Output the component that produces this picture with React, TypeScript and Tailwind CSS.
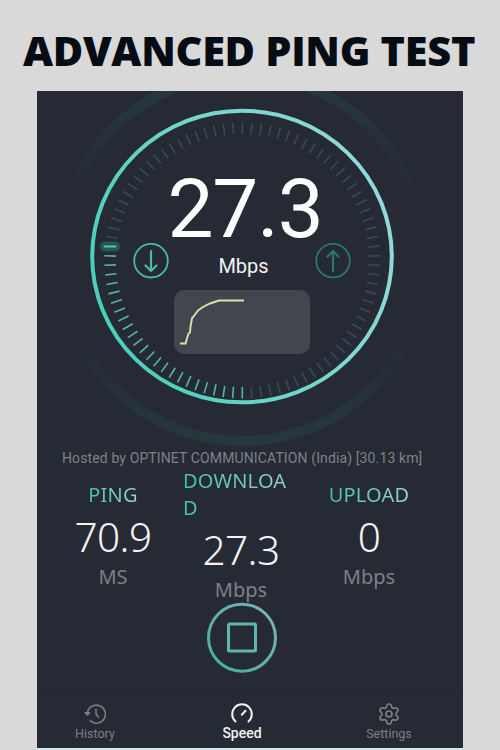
import { Settings } from "lucide-react"

const TICK_COUNT = 90
const ACTIVE_TICKS = 24

const ticks = Array.from({ length: TICK_COUNT }, (_, i) => {
  // starts at the bottom and runs clockwise
  const angle = ((90 + i * (360 / TICK_COUNT)) * Math.PI) / 180
  return {
    x1: 242.3 + 126.5 * Math.cos(angle),
    y1: 260.5 + 126.5 * Math.sin(angle),
    x2: 242.3 + 138 * Math.cos(angle),
    y2: 260.5 + 138 * Math.sin(angle),
    active: i < ACTIVE_TICKS,
  }
})

function Gauge() {
  return (
    <svg viewBox="37 91 426 357" className="col-start-1 row-start-1 h-[357px] w-[426px]" fill="none">
      <defs>
        <linearGradient id="ring" x1="0" y1="0.7" x2="1" y2="0.3">
          <stop offset="0" stopColor="#45cfba" />
          <stop offset="0.5" stopColor="#72d5cb" />
          <stop offset="1" stopColor="#93d9db" />
        </linearGradient>
        <linearGradient id="halo" gradientUnits="userSpaceOnUse" x1="0" y1="75" x2="0" y2="441">
          <stop offset="0" stopColor="#26393f" />
          <stop offset="0.12" stopColor="#26343b" />
          <stop offset="0.32" stopColor="#262a34" />
          <stop offset="0.7" stopColor="#262a34" />
          <stop offset="1" stopColor="#26383d" />
        </linearGradient>
      </defs>
      <circle cx="242.5" cy="258" r="183" stroke="url(#halo)" strokeWidth="10" />
      <ellipse cx="242" cy="256.5" rx="149.8" ry="145.8" stroke="url(#ring)" strokeWidth="4" />
      {ticks.map((t, i) => (
        <line
          key={i}
          x1={t.x1}
          y1={t.y1}
          x2={t.x2}
          y2={t.y2}
          stroke={t.active ? "#52b5aa" : "#38495a"}
          strokeWidth="1.6"
        />
      ))}
      <rect x="100" y="241.5" width="20" height="10" rx="5" fill="#25594f" />
      <path d="M104.5 246.5h11" stroke="#50c9b4" strokeWidth="2" strokeLinecap="round" />
    </svg>
  )
}

function DirectionIcon({ up = false }: { up?: boolean }) {
  return (
    <svg
      viewBox="0 0 36 36"
      className="size-9"
      fill="none"
      stroke={up ? "#2b7770" : "#4bb8aa"}
      strokeWidth="2.2"
      strokeLinecap="round"
      strokeLinejoin="round"
    >
      <circle cx="18" cy="17.700" r="16.8" strokeWidth="1.8" />
      {up ? <path d="M18 28V8M12.5 13.5L18 8l5.5 5.5" /> : <path d="M18 8v20M12.5 22.5L18 28l5.5-5.5" />}
    </svg>
  )
}

function Stat({ label, value, unit }: { label: string; value: string; unit: string }) {
  return (
    <div className="flex w-[116px] flex-col items-center">
      <div className="flex w-full justify-center">
        <p className="max-w-[106px] bg-linear-to-r from-[#3fc2ad] to-[#92d2d4] bg-clip-text text-[20px] leading-[27px] tracking-[0.2px] break-all text-transparent">
          {label}
        </p>
        {label.length > 6 && <span className="w-[10px]" />}
      </div>
      <p className="pt-[2px] text-[40.5px] leading-[53px] font-light tracking-[-0.6px] text-[#f3f3f5]">{value}</p>
      <p className="text-[20px] leading-[27px] text-[#7d8087]">{unit}</p>
    </div>
  )
}

function HistoryIcon() {
  return (
    <svg viewBox="0 0 22 22" className="size-[22px]" fill="none" stroke="currentColor" strokeWidth="1.6" strokeLinecap="round">
      <path d="M3.4 10.4a9 9 0 1 1 3 7.5M12 6.2v4.6l2.4 3.4" />
      <path d="M1.2 9.8h4.2l-2.1 2.2z" fill="currentColor" strokeLinejoin="round" />
    </svg>
  )
}

function SpeedIcon() {
  return (
    <svg viewBox="0 0 22 22" className="size-[22px]" fill="none" stroke="currentColor" strokeWidth="2" strokeLinecap="round">
      <path d="M4.5 18.5a9.8 9.8 0 1 1 13 0M10.8 11.7l3.7-4" />
    </svg>
  )
}

export default function App() {
  return (
    <main className="flex h-[750px] w-[500px] flex-col items-center overflow-hidden bg-[#d9d9d9]">
      <h1 className="flex h-[91px] items-center pt-[9px] pr-[2px] font-['Open_Sans',sans-serif] text-[41.5px] font-extrabold tracking-[-0.3px] whitespace-nowrap text-[#050c13]">
        ADVANCED PING TEST
      </h1>

      <section className="flex h-[657px] w-[426px] flex-col bg-[#262a34] font-['Roboto',sans-serif]">
        <div className="grid h-[357px]">
          <Gauge />
          <div className="col-start-1 row-start-1 flex flex-col items-center pt-[86px]">
            <p className="mr-[10px] text-[82px] leading-[64px] tracking-[-1.2px] text-white">27.3</p>
            <div className="mt-[2px] mr-[16px] flex h-9 w-[218px] items-center justify-between">
              <DirectionIcon />
              <p className="pt-[9px] pl-[3px] text-[20px] leading-6 text-[#f2f2f4]">Mbps</p>
              <DirectionIcon up />
            </div>
            <div className="mt-[11px] mr-[16px] h-16 w-[136px] rounded-[10px] bg-[#42464e]">
              <svg viewBox="174 290 136 64" className="h-16 w-[136px]" fill="none">
                <path
                  d="M180 343.5h5.500l1.5-5 1.5-5 1.5-1 .5-6 1.5-8 3-4 3-4 5-3.5 7-3.5 9-3h25"
                  stroke="#d5e5a7"
                  strokeWidth="1.9"
                />
              </svg>
            </div>
          </div>
        </div>

        <p className="pl-[25px] text-[14px] leading-5 tracking-[0.12px] whitespace-nowrap text-[#7e8188]">
          Hosted by OPTINET COMMUNICATION (India) [30.13 km]
        </p>

        <div className="-mt-px flex h-[136px] items-center gap-[12px] pl-[18px] font-['Noto_Sans',sans-serif]">
          <Stat label="PING" value="70.9" unit="MS" />
          <Stat label="DOWNLOAD" value="27.3" unit="Mbps" />
          <Stat label="UPLOAD" value="0" unit="Mbps" />
        </div>

        <svg viewBox="0 0 72 72" className="-mt-px ml-[169px] size-[72px]" fill="none">
          <defs>
            <linearGradient id="stop" x1="0" y1="1" x2="1" y2="0">
              <stop offset="0" stopColor="#3fae9f" />
              <stop offset="1" stopColor="#7fb4b8" />
            </linearGradient>
          </defs>
          <circle cx="36" cy="35.7" r="33.5" stroke="url(#stop)" strokeWidth="3" />
          <rect x="22.5" y="22" width="27" height="27" rx="1" stroke="#61b5b0" strokeWidth="3" />
        </svg>

        <nav className="mt-auto grid h-[56px] grid-cols-[116px_178px_116px] border-t border-[#22262f] text-[12.5px] leading-4 text-[#7b7e85]">
          <div className="flex flex-col items-center gap-px pt-[10px]">
            <HistoryIcon />
            <span>History</span>
          </div>
          <div className="flex flex-col items-center pt-[10px] text-[14px] font-medium text-[#f3f3f5]">
            <SpeedIcon />
            <span>Speed</span>
          </div>
          <div className="flex flex-col items-center pt-[9px]">
            <Settings size={24} strokeWidth={1.7} />
            <span>Settings</span>
          </div>
        </nav>
      </section>
      <div className="h-[2px] w-[426px] bg-[#d3e8e4]" />
    </main>
  )
}
